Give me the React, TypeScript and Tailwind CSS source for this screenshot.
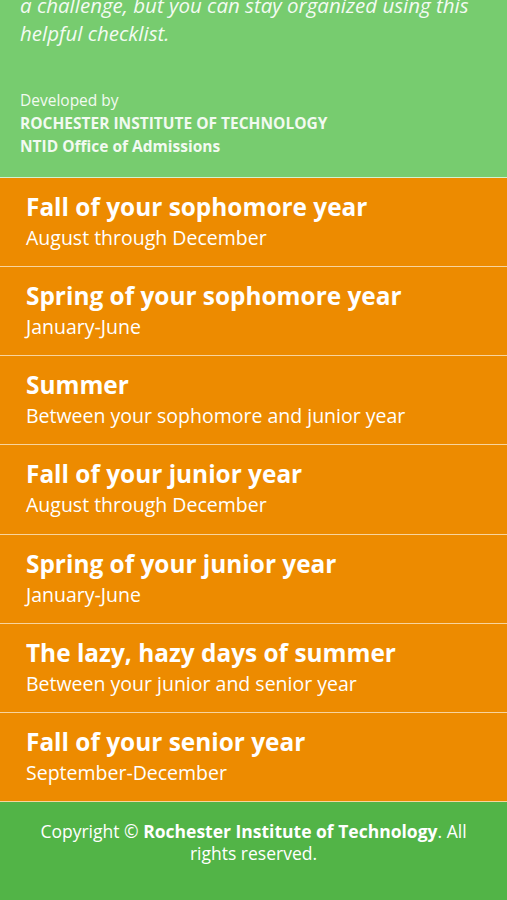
import React from "react";

const rows = [
  ["Fall of your sophomore year", "August through December"],
  ["Spring of your sophomore year", "January-June"],
  ["Summer", "Between your sophomore and junior year"],
  ["Fall of your junior year", "August through December"],
  ["Spring of your junior year", "January-June"],
  ["The lazy, hazy days of summer", "Between your junior and senior year"],
  ["Fall of your senior year", "September-December"],
];

export default function App() {
  return (
    <div className="w-[507px] h-[900px] overflow-hidden bg-[#52b447] text-white" style={{ fontFamily: '"Open Sans", sans-serif' }}>
      <div className="h-[178px] bg-[#77cc6f] px-5 border-b-[1.5px] border-[#d4f0cf] flex flex-col">
        <p className="italic text-[20.5px] leading-[28px] -mt-[9px] text-[#f3fbf2] pr-4">
          a challenge, but you can stay organized using this helpful checklist.
        </p>
        <div className="mt-[42px] text-[15.5px] leading-[23px] text-[#f2faf1]">
          <div>Developed by</div>
          <div className="font-bold">ROCHESTER INSTITUTE OF TECHNOLOGY</div>
          <div className="font-bold">NTID Office of Admissions</div>
        </div>
      </div>
      <div className="flex flex-col">
        {rows.map(([t, s]) => (
          <div key={t} className="h-[89.15px] bg-[#ed8b00] border-b-[1.5px] border-[#f8d49d] pl-[26px] pt-[13px]">
            <div className="font-bold text-[24.4px] leading-[32px]">{t}</div>
            <div className="text-[19.5px] leading-[29px]">{s}</div>
          </div>
        ))}
      </div>
      <div className="px-9 pt-[18px] text-center text-[17.5px] leading-[22px]">
        Copyright © <span className="font-bold">Rochester Institute of Technology</span>. All rights reserved.
      </div>
    </div>
  );
}
